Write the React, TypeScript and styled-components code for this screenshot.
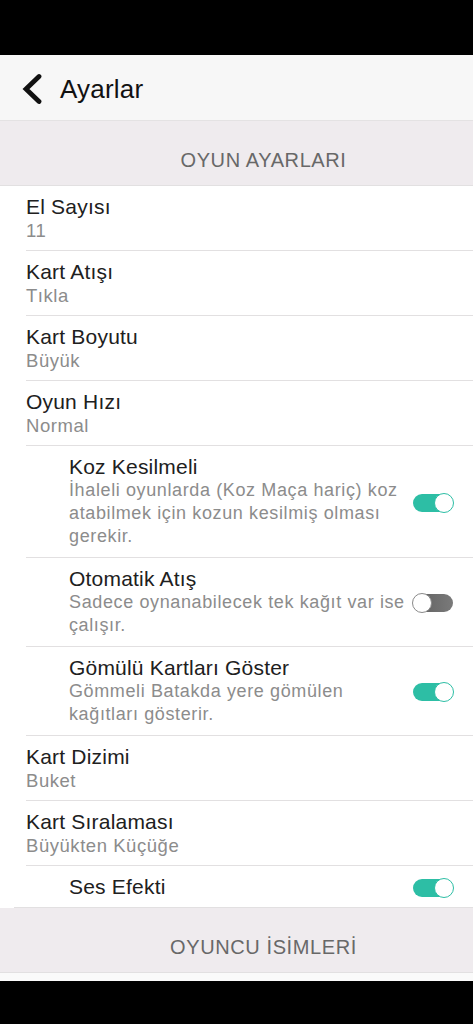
import React from 'react';
import styled, { createGlobalStyle } from 'styled-components';

const GlobalStyle = createGlobalStyle`
  html, body {
    margin: 0;
    padding: 0;
    background: #000;
    font-family: "Liberation Sans", Arial, sans-serif;
  }
`;

const Page = styled.div`
  width: 473px;
  height: 1024px;
  display: flex;
  flex-direction: column;
  background: #000;
  overflow: hidden;
`;

const StatusBar = styled.div`
  height: 55px;
  background: #000;
  flex-shrink: 0;
`;

const Header = styled.div`
  height: 66px;
  box-sizing: border-box;
  display: flex;
  align-items: center;
  gap: 18px;
  padding: 3px 0 0 22px;
  background: #f7f7f7;
  border-bottom: 1px solid #e4e2e3;
  flex-shrink: 0;
`;

const Title = styled.div`
  font-size: 26px;
  color: #111;
  letter-spacing: 0.2px;
`;

const SectionHeader = styled.div`
  height: 64px;
  box-sizing: border-box;
  display: flex;
  align-items: center;
  justify-content: center;
  padding: 15px 0 0 54px;
  background: #efebee;
  color: #686868;
  font-size: 20px;
  letter-spacing: 0.6px;
  flex-shrink: 0;
`;

const List = styled.div`
  background: #fff;
  border-top: 1px solid #e2e0e1;
  display: flex;
  flex-direction: column;
`;

const Row = styled.div<{ $indent?: boolean; $last?: boolean }>`
  display: flex;
  align-items: center;
  padding: 9px 20px 8px ${(p) => (p.$indent ? 69 : 26)}px;
  position: relative;
  &::after {
    content: '';
    position: absolute;
    left: ${(p) => (p.$last ? 14 : 26)}px;
    right: 0;
    bottom: 0;
    height: 1px;
    background: #e2e0e1;
  }
`;

const RowText = styled.div`
  flex: 1;
  min-width: 0;
  padding-bottom: 1px;
`;

const RowTitle = styled.div`
  font-size: 21px;
  line-height: 24px;
  letter-spacing: 0.2px;
  color: #202020;
`;

const RowValue = styled.div`
  font-size: 18.5px;
  line-height: 23px;
  letter-spacing: 0.55px;
  color: #8c8c8c;
`;

const Desc = styled.div`
  font-size: 18px;
  line-height: 23px;
  letter-spacing: 0.62px;
  color: #8c8c8c;
  padding-bottom: 1px;
`;

const Toggle = styled.div<{ $on: boolean }>`
  width: 40px;
  height: 18px;
  border-radius: 9px;
  flex-shrink: 0;
  margin-left: 3px;
  position: relative;
  background: ${(p) => (p.$on ? '#2dbea5' : 'linear-gradient(90deg, #5e5e5e, #7a7a7a)')};
`;

const Knob = styled.div<{ $on: boolean }>`
  position: absolute;
  top: -1px;
  ${(p) => (p.$on ? 'right: -1px;' : 'left: -1px;')}
  width: 18px;
  height: 18px;
  border-radius: 50%;
  background: #fff;
  border: 1px solid ${(p) => (p.$on ? '#2dbea5' : '#8a8a8a')};
`;

const Footer = styled.div`
  height: 8px;
  background: #fafafa;
  border-top: 1px solid #e2e0e1;
  flex-shrink: 0;
`;

const Switch = ({ on }: { on: boolean }) => (
  <Toggle $on={on}>
    <Knob $on={on} />
  </Toggle>
);

const BackIcon = () => (
  <svg width="20" height="32" viewBox="0 0 20 32">
    <path d="M17 3.5 L4 16 L17 28.5" fill="none" stroke="#111" strokeWidth="4.8" strokeLinecap="round" strokeLinejoin="miter" />
  </svg>
);

type Item =
  | { kind: 'value'; title: string; value: string }
  | { kind: 'toggle'; title: string; desc?: string; on: boolean };

const items: Item[] = [
  { kind: 'value', title: 'El Sayısı', value: '11' },
  { kind: 'value', title: 'Kart Atışı', value: 'Tıkla' },
  { kind: 'value', title: 'Kart Boyutu', value: 'Büyük' },
  { kind: 'value', title: 'Oyun Hızı', value: 'Normal' },
  {
    kind: 'toggle',
    title: 'Koz Kesilmeli',
    desc: 'İhaleli oyunlarda (Koz Maça hariç) koz atabilmek için kozun kesilmiş olması gerekir.',
    on: true,
  },
  { kind: 'toggle', title: 'Otomatik Atış', desc: 'Sadece oynanabilecek tek kağıt var ise çalışır.', on: false },
  { kind: 'toggle', title: 'Gömülü Kartları Göster', desc: 'Gömmeli Batakda yere gömülen kağıtları gösterir.', on: true },
  { kind: 'value', title: 'Kart Dizimi', value: 'Buket' },
  { kind: 'value', title: 'Kart Sıralaması', value: 'Büyükten Küçüğe' },
  { kind: 'toggle', title: 'Ses Efekti', on: true },
];

export default function App() {
  return (
    <Page>
      <GlobalStyle />
      <StatusBar />
      <Header>
        <BackIcon />
        <Title>Ayarlar</Title>
      </Header>
      <SectionHeader>OYUN AYARLARI</SectionHeader>
      <List>
        {items.map((item, i) => {
          const last = i === items.length - 1;
          if (item.kind === 'value') {
            return (
              <Row key={item.title} $last={last}>
                <RowText>
                  <RowTitle>{item.title}</RowTitle>
                  <RowValue>{item.value}</RowValue>
                </RowText>
              </Row>
            );
          }
          return (
            <Row key={item.title} $indent $last={last}>
              <RowText>
                <RowTitle>{item.title}</RowTitle>
                {item.desc && <Desc>{item.desc}</Desc>}
              </RowText>
              <Switch on={item.on} />
            </Row>
          );
        })}
      </List>
      <SectionHeader>OYUNCU İSİMLERİ</SectionHeader>
      <Footer />
    </Page>
  );
}
